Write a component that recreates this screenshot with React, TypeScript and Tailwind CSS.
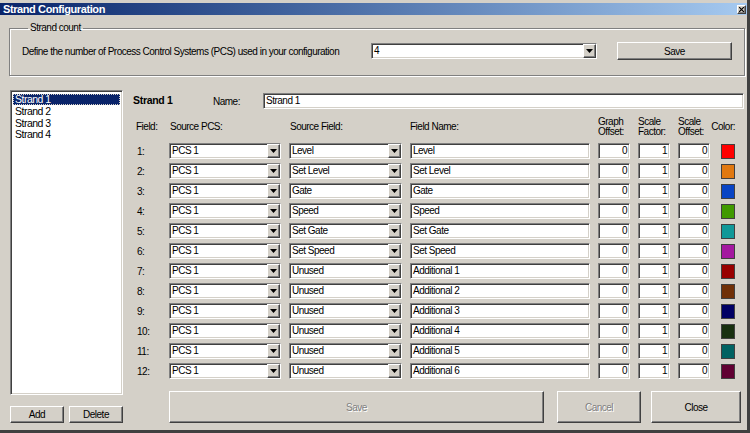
import React from 'react';

const sunken =
  'bg-white border border-t-[#808080] border-l-[#808080] border-b-white border-r-white shadow-[inset_1px_1px_0_#404040,inset_-1px_-1px_0_#d4d0c8]';
const raised =
  'bg-[#d4d0c8] border border-t-white border-l-white border-b-[#404040] border-r-[#404040] shadow-[inset_-1px_-1px_0_#808080]';

const rows = [
  { field: 'Level', name: 'Level', color: 'bg-[#ff0000]' },
  { field: 'Set Level', name: 'Set Level', color: 'bg-[#e07810]' },
  { field: 'Gate', name: 'Gate', color: 'bg-[#0844c4]' },
  { field: 'Speed', name: 'Speed', color: 'bg-[#409a00]' },
  { field: 'Set Gate', name: 'Set Gate', color: 'bg-[#109898]' },
  { field: 'Set Speed', name: 'Set Speed', color: 'bg-[#a418a0]' },
  { field: 'Unused', name: 'Additional 1', color: 'bg-[#980000]' },
  { field: 'Unused', name: 'Additional 2', color: 'bg-[#703008]' },
  { field: 'Unused', name: 'Additional 3', color: 'bg-[#000064]' },
  { field: 'Unused', name: 'Additional 4', color: 'bg-[#183010]' },
  { field: 'Unused', name: 'Additional 5', color: 'bg-[#006262]' },
  { field: 'Unused', name: 'Additional 6', color: 'bg-[#600032]' },
];

function Arrow() {
  return (
    <div className={`w-[13px] h-full flex items-center justify-center flex-shrink-0 ${raised}`}>
      <svg width="7" height="4" viewBox="0 0 7 4">
        <polygon points="0,0 7,0 3.5,4" fill="#000" />
      </svg>
    </div>
  );
}

function Combo({ value, className = '' }: { value: string; className?: string }) {
  return (
    <div className={`flex items-stretch h-[16px] ${sunken} ${className}`}>
      <div className="flex-1 pl-[2px] leading-[14px] whitespace-nowrap overflow-hidden">{value}</div>
      <Arrow />
    </div>
  );
}

function TextBox({ value, right = false }: { value: string; right?: boolean }) {
  return (
    <div
      className={`h-[16px] leading-[14px] whitespace-nowrap overflow-hidden ${sunken} ${
        right ? 'text-right pr-[2px]' : 'pl-[2px]'
      }`}
    >
      {value}
    </div>
  );
}

export default function App() {
  return (
    <div className="w-[750px] h-[433px] bg-[#d4d0c8] text-black text-[10px] tracking-[-0.5px] font-['Liberation_Sans',Arial,sans-serif] border-r-[3px] border-b-[3px] border-r-[#404040] border-b-[#404040] pt-[3px] flex flex-col overflow-hidden">
      {/* Title bar */}
      <div className="h-[12px] flex items-center justify-between bg-gradient-to-r from-[#0a246a] to-[#a6caf0] pl-[3px] pr-[1px]">
        <span className="text-white font-bold text-[11px] leading-[12px] tracking-[-0.4px]">Strand Configuration</span>
        <div className={`w-[9px] h-[9px] flex items-center justify-center ${raised}`}>
          <svg width="5" height="5" viewBox="0 0 5 5">
            <path d="M0 0L5 5M5 0L0 5" stroke="#000" strokeWidth="1.2" />
          </svg>
        </div>
      </div>

      {/* Strand count group */}
      <fieldset className="mt-[7px] ml-[9px] w-[735px] border border-[#808080] shadow-[1px_1px_0_#fff,inset_1px_1px_0_#fff] px-[12px] pb-[15px]">
        <legend className="ml-[6px] px-[2px] leading-[12px]">Strand count</legend>
        <div className="mt-[8px] h-[18px] flex items-center">
          <span className="w-[349px] whitespace-nowrap">
            Define the number of Process Control Systems (PCS) used in your configuration
          </span>
          <Combo value="4" className="w-[226px]" />
          <button className={`ml-[20px] w-[115px] h-[18px] ${raised}`}>Save</button>
        </div>
      </fieldset>

      {/* Main area */}
      <div className="mt-[14px] flex">
        {/* Strand list */}
        <div className="ml-[10px] w-[113px] flex flex-col">
          <div className={`h-[305px] p-[2px] pt-[3px] text-[10.5px] ${sunken}`}>
            <div className="h-[11px] leading-[11px] bg-[#0a246a] text-white pl-[2px] outline-1 outline-dotted outline-[#d4d0c8] -outline-offset-1">
              Strand 1
            </div>
            <div className="h-[11.5px] leading-[12px] pl-[2px]">Strand 2</div>
            <div className="h-[11.5px] leading-[12px] pl-[2px]">Strand 3</div>
            <div className="h-[11.5px] leading-[12px] pl-[2px]">Strand 4</div>
          </div>
          <div className="mt-[11px] flex gap-[5px]">
            <button className={`w-[54px] h-[17px] ${raised}`}>Add</button>
            <button className={`w-[54px] h-[17px] ${raised}`}>Delete</button>
          </div>
        </div>

        {/* Strand detail */}
        <div className="ml-[10px] mt-[3px] w-[611px] flex flex-col">
          <div className="h-[16px] flex items-center">
            <span className="w-[80px] font-bold text-[10.5px] tracking-[-0.3px]">Strand 1</span>
            <span className="w-[50px]">Name:</span>
            <div className="flex-1">
              <TextBox value="Strand 1" />
            </div>
          </div>

          <div className="mt-[7px] h-[22px] grid grid-cols-[28px_112px_113px_180px_32px_32px_32px_17px] gap-x-2 items-center leading-[10px]">
            <div className="pl-[3px]">Field:</div>
            <div className="pl-[1px]">Source PCS:</div>
            <div className="pl-[1px]">Source Field:</div>
            <div>Field Name:</div>
            <div>
              Graph
              <br />
              Offset:
            </div>
            <div>
              Scale
              <br />
              Factor:
            </div>
            <div>
              Scale
              <br />
              Offset:
            </div>
            <div className="justify-self-end whitespace-nowrap">Color:</div>
          </div>

          <div className="mt-[5px] grid grid-cols-[28px_112px_113px_180px_32px_32px_32px_17px] gap-x-2 gap-y-1 items-center">
            {rows.map((r, i) => (
              <React.Fragment key={i}>
                <div className="pl-[4px]">{i + 1}:</div>
                <Combo value="PCS 1" />
                <Combo value={r.field} />
                <TextBox value={r.name} />
                <TextBox value="0" right />
                <TextBox value="1" right />
                <TextBox value="0" right />
                <div className={`justify-self-end w-[14px] h-[15px] border border-[#404040] ${r.color}`} />
              </React.Fragment>
            ))}
          </div>

          <div className="mt-[12px] pl-[36px] flex">
            <button className={`w-[375px] h-[32px] text-[#808080] [text-shadow:1px_1px_0_#fff] ${raised}`}>Save</button>
            <button className={`ml-[13px] w-[84px] h-[32px] text-[#808080] [text-shadow:1px_1px_0_#fff] ${raised}`}>
              Cancel
            </button>
            <button className={`ml-[10px] w-[90px] h-[32px] ${raised}`}>Close</button>
          </div>
        </div>
      </div>
    </div>
  );
}
